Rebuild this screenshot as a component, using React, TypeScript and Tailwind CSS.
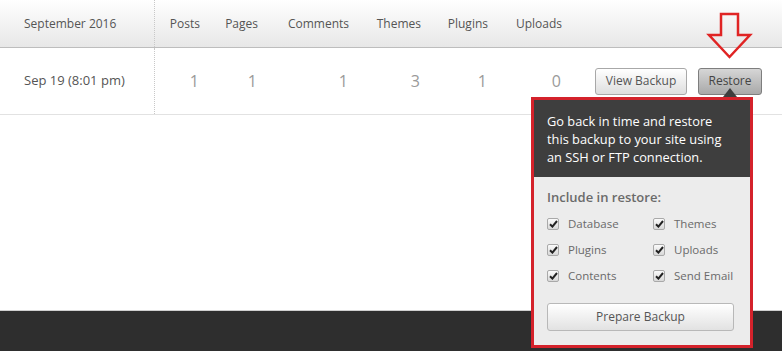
import React from "react";

const cols = [
  { label: "Posts", value: "1", w: "w-[45px]" },
  { label: "Pages", value: "1", w: "w-[58px]" },
  { label: "Comments", value: "1", w: "w-[91px]" },
  { label: "Themes", value: "3", w: "w-[72px]" },
  { label: "Plugins", value: "1", w: "w-[67px]" },
  { label: "Uploads", value: "0", w: "w-[74px]" },
];

function Check({ label }: { label: string }) {
  return (
    <div className="flex items-center h-[26px]">
      <div className="w-[12px] h-[12px] border border-[#a9a9a9] rounded-[2px] bg-gradient-to-b from-[#fbfbfb] to-[#d8d8d8] flex items-center justify-center">
        <svg width="9" height="8" viewBox="0 0 9 8">
          <path d="M1 4.2 L3.4 6.6 L8 1" stroke="#222" strokeWidth="2" fill="none" />
        </svg>
      </div>
      <span className="ml-[9px] text-[11.5px] text-[#6a6a6a]">{label}</span>
    </div>
  );
}

export default function App() {
  return (
    <div className="relative h-[351px] w-[782px] overflow-hidden bg-white flex flex-col font-['Open_Sans',sans-serif]">
      {/* header row */}
      <div className="h-[48px] flex items-center bg-gradient-to-b from-white to-[#e7e7e7] border-b border-[#bdbdbd] text-[12px] text-[#555]">
        <div className="w-[155px] h-full flex items-center pl-[24px] border-r border-dotted border-[#c8c8c8]">
          September 2016
        </div>
        {cols.map((c) => (
          <div key={c.label} className={`${c.w} text-right`}>
            {c.label}
          </div>
        ))}
      </div>
      {/* data row */}
      <div className="h-[67px] flex items-center border-b border-[#e2e2e2]">
        <div className="w-[155px] h-full flex items-center pl-[24px] border-r border-dotted border-[#c8c8c8] text-[13px] text-[#555]">
          Sep 19 (8:01 pm)
        </div>
        {cols.map((c) => (
          <div key={c.label} className={`${c.w} text-right text-[16px] text-[#9a9a9a] pr-[1px]`}>
            {c.value}
          </div>
        ))}
        <div className="ml-auto mr-[20px] flex items-center gap-[11px]">
          <button className="h-[27px] w-[92px] rounded-[3px] border border-[#a8a8a8] bg-gradient-to-b from-white to-[#dedede] text-[12px] text-[#555]">
            View Backup
          </button>
          <button className="h-[27px] w-[64px] rounded-[3px] border border-[#7e7e7e] bg-gradient-to-b from-[#d6d6d6] to-[#a9a9a9] text-[12px] text-[#444]">
            Restore
          </button>
        </div>
      </div>
      <div className="flex-1" />
      {/* footer */}
      <div className="h-[41px] border-t border-[#cfcfcf] bg-[#2e2e2e]" />

      {/* annotation arrow */}
      <svg className="absolute left-[706px] top-[12px]" width="48" height="48" viewBox="0 0 48 48">
        <path
          d="M15 2 L32 2 L32 23 L44 23 L23.5 45 L3 23 L15 23 Z"
          fill="none"
          stroke="#e02424"
          strokeWidth="2.5"
          strokeLinejoin="miter"
        />
      </svg>

      {/* caret */}
      <div className="absolute left-[723px] top-[88px] w-0 h-0 border-l-[7px] border-r-[7px] border-b-[9px] border-l-transparent border-r-transparent border-b-[#3e3e3e]" />

      {/* popover */}
      <div className="absolute left-[531px] top-[97px] w-[222px] h-[251px] border-[3px] border-[#d4222b] bg-[#ececec] flex flex-col">
        <div className="h-[77px] bg-[#3e3e3e] px-[13px] pt-[12px] text-[12.8px] leading-[18px] text-white whitespace-nowrap">
          Go back in time and restore
          <br />
          this backup to your site using
          <br />
          an SSH or FTP connection.
        </div>
        <div className="px-[13px] pt-[11px] flex flex-col">
          <div className="text-[13px] font-semibold text-[#6a6a6a] h-[18px] leading-[18px]">
            Include in restore:
          </div>
          <div className="mt-[5px] grid grid-cols-[106px_1fr]">
            <Check label="Database" />
            <Check label="Themes" />
            <Check label="Plugins" />
            <Check label="Uploads" />
            <Check label="Contents" />
            <Check label="Send Email" />
          </div>
          <button className="mt-[14px] h-[28px] w-[187px] rounded-[3px] border border-[#b8b8b8] bg-gradient-to-b from-white to-[#e2e2e2] text-[12px] text-[#555]">
            Prepare Backup
          </button>
        </div>
      </div>
    </div>
  );
}
